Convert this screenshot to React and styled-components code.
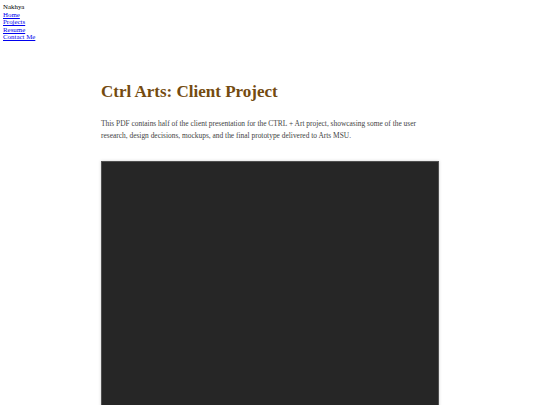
import React from 'react';
import styled, { createGlobalStyle } from 'styled-components';

const GlobalStyle = createGlobalStyle`
  html, body {
    margin: 0;
    padding: 0;
    background: #ffffff;
  }
  body {
    font-family: "Liberation Serif", "Times New Roman", serif;
    overflow: hidden;
  }
`;

const Nav = styled.nav`
  padding: 3px 0 0 3px;
  font-size: 6.9px;
  line-height: 7.6px;
  color: #000;
`;

const NavLink = styled.a`
  display: block;
  color: #0000ee;
  text-decoration: underline;
`;

const Main = styled.main`
  width: 338px;
  margin: 0 auto;
  padding-top: 39px;
`;

const Title = styled.h1`
  margin: 0;
  font-size: 17px;
  line-height: 24px;
  font-weight: bold;
  color: #744b10;
`;

const Description = styled.p`
  margin: 14px 0 0;
  font-size: 7.43px;
  line-height: 12px;
  color: #444444;
`;

const Viewer = styled.div`
  margin-top: 19px;
  height: 260px;
  background: #262626;
  border: 1px solid #505050;
  box-shadow: 0 0 3px rgba(0, 0, 0, 0.18);
`;

export default function App() {
  return (
    <>
      <GlobalStyle />
      <Nav>
        <div>Nakhya</div>
        <NavLink href="#">Home</NavLink>
        <NavLink href="#">Projects</NavLink>
        <NavLink href="#">Resume</NavLink>
        <NavLink href="#">Contact Me</NavLink>
      </Nav>
      <Main>
        <Title>Ctrl Arts: Client Project</Title>
        <Description>
          This PDF contains half of the client presentation for the CTRL + Art project, showcasing some of the user
          research, design decisions, mockups, and the final prototype delivered to Arts MSU.
        </Description>
        <Viewer />
      </Main>
    </>
  );
}
